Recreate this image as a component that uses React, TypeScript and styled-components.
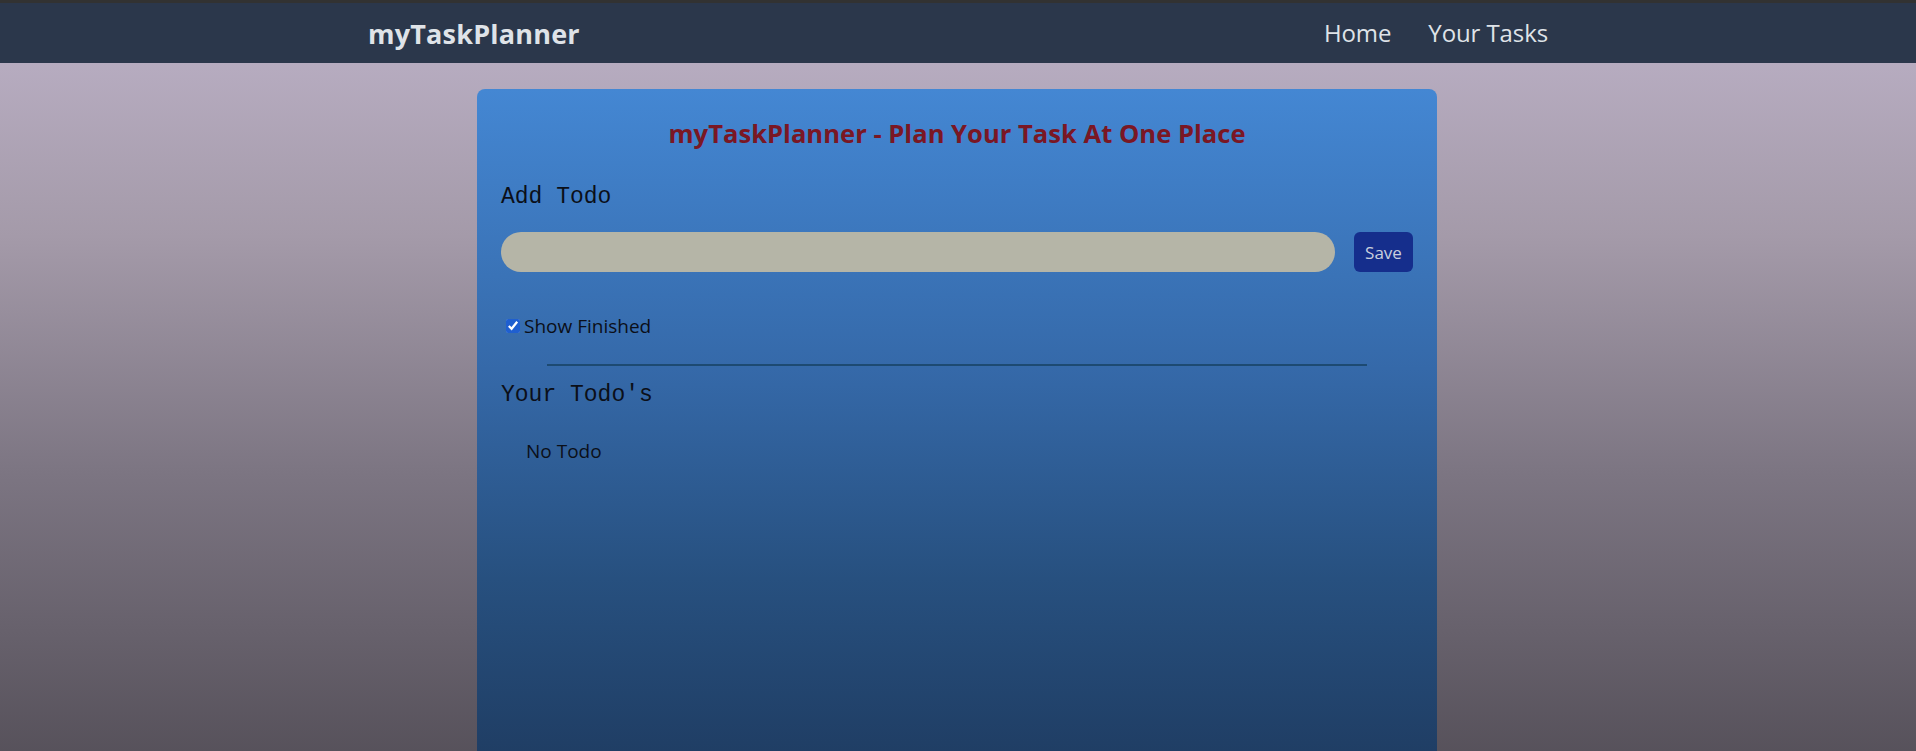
import React, { useState } from "react";
import styled, { createGlobalStyle } from "styled-components";

const GlobalStyle = createGlobalStyle`
  html, body {
    margin: 0;
    padding: 0;
    overflow: hidden;
  }
  body {
    font-family: "Open Sans", "Noto Sans", sans-serif;
  }
  * { box-sizing: border-box; }
`;

const Page = styled.div`
  min-height: 100vh;
  display: flex;
  flex-direction: column;
  background: linear-gradient(180deg, #bdb2c8 0%, #a49aa9 30%, #7c7582 60%, #524d56 100%);
`;

const TopStrip = styled.div`
  height: 3px;
  background: #323232;
`;

const NavBar = styled.nav`
  height: 60px;
  background: #2b374b;
`;

const NavInner = styled.div`
  width: 1180px;
  height: 100%;
  margin: 0 auto;
  display: flex;
  align-items: center;
  justify-content: space-between;
  padding-bottom: 2px;
`;

const Logo = styled.div`
  font-size: 27px;
  font-weight: 700;
  color: #dfe3e8;
  letter-spacing: 0.2px;
  margin-top: 2px;
`;

const NavLinks = styled.ul`
  display: flex;
  gap: 37px;
  list-style: none;
  margin: 0;
  padding: 0;
`;

const NavLink = styled.li`
  font-size: 24px;
  color: #dfe3e8;
  cursor: pointer;
  letter-spacing: -0.1px;
`;

const Main = styled.main`
  flex: 1;
  display: flex;
  justify-content: center;
  padding-top: 26px;
  padding-right: 2px;
`;

const Card = styled.section`
  width: 960px;
  min-height: 700px;
  border-radius: 8px;
  padding: 29px 24px 24px;
  background: linear-gradient(180deg, #4487d3 0%, #3569a9 40%, #27507f 70%, #1e3a5f 100%);
`;

const Title = styled.h1`
  margin: 0;
  text-align: center;
  font-size: 25.6px;
  line-height: 32px;
  font-weight: 700;
  color: #7a1724;
  letter-spacing: 0;
`;

const SectionHeading = styled.h2<{ $top: number }>`
  margin: ${(p) => p.$top}px 0 0;
  font-family: "Liberation Mono", "DejaVu Sans Mono", monospace;
  font-weight: 400;
  font-size: 23px;
  line-height: 32px;
  color: #0b0f18;
`;

const InputRow = styled.div`
  display: flex;
  align-items: center;
  gap: 19px;
  margin-top: 19px;
`;

const TodoInput = styled.input`
  flex: 1;
  height: 40px;
  border: none;
  border-radius: 20px;
  background: #b5b5a7;
  padding: 0 16px;
  font-size: 16px;
  outline: none;
`;

const SaveButton = styled.button`
  width: 59px;
  height: 40px;
  border: none;
  border-radius: 6px;
  background: #152e8c;
  color: #c9d0de;
  font-family: "Open Sans", sans-serif;
  font-size: 17px;
  padding: 0;
  cursor: pointer;
`;

const CheckRow = styled.label`
  display: flex;
  align-items: center;
  margin-top: 40px;
  height: 28px;
  font-size: 19px;
  color: #0b0f18;
`;

const CheckBox = styled.input`
  width: 14px;
  height: 14px;
  margin: 0 4px 0 5px;
  accent-color: #1f5fd0;
`;

const Divider = styled.hr`
  width: 90%;
  margin: 24px auto 0;
  border: none;
  height: 2px;
  background: #1d4a72;
`;

const TodoList = styled.div`
  margin-top: 26px;
  padding-left: 25px;
`;

const EmptyText = styled.div`
  font-size: 19px;
  line-height: 28px;
  color: #0b0f18;
`;

export default function App() {
  const [showFinished, setShowFinished] = useState(true);
  const [todo, setTodo] = useState("");
  return (
    <>
      <GlobalStyle />
      <Page>
        <TopStrip />
        <NavBar>
          <NavInner>
            <Logo>myTaskPlanner</Logo>
            <NavLinks>
              <NavLink>Home</NavLink>
              <NavLink>Your Tasks</NavLink>
            </NavLinks>
          </NavInner>
        </NavBar>
        <Main>
          <Card>
            <Title>myTaskPlanner - Plan Your Task At One Place</Title>
            <SectionHeading $top={31}>Add Todo</SectionHeading>
            <InputRow>
              <TodoInput value={todo} onChange={(e) => setTodo(e.target.value)} />
              <SaveButton>Save</SaveButton>
            </InputRow>
            <CheckRow>
              <CheckBox
                type="checkbox"
                checked={showFinished}
                onChange={() => setShowFinished(!showFinished)}
              />
              Show Finished
            </CheckRow>
            <Divider />
            <SectionHeading $top={13}>Your Todo's</SectionHeading>
            <TodoList>
              <EmptyText>No Todo</EmptyText>
            </TodoList>
          </Card>
        </Main>
      </Page>
    </>
  );
}
